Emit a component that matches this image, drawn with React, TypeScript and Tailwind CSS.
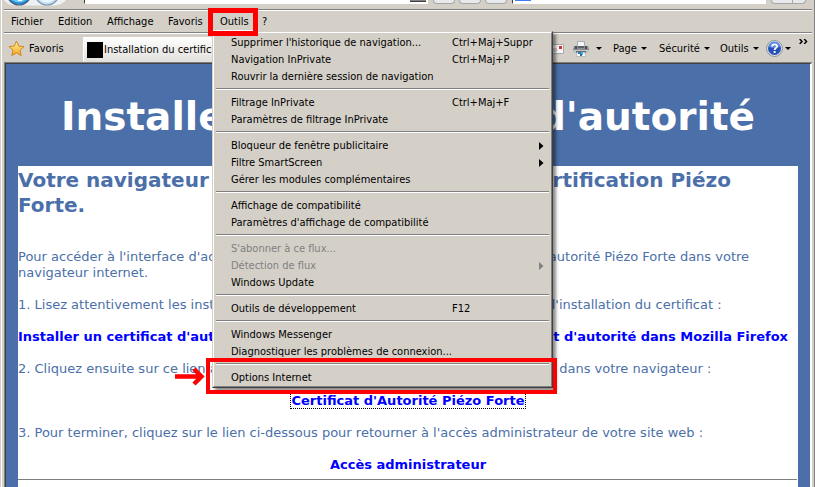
import React from "react";

type Entry = {
  label: string;
  shortcut?: string;
  submenu?: boolean;
  disabled?: boolean;
};

const groups: Entry[][] = [
  [
    { label: "Supprimer l'historique de navigation...", shortcut: "Ctrl+Maj+Suppr" },
    { label: "Navigation InPrivate", shortcut: "Ctrl+Maj+P" },
    { label: "Rouvrir la dernière session de navigation" },
  ],
  [
    { label: "Filtrage InPrivate", shortcut: "Ctrl+Maj+F" },
    { label: "Paramètres de filtrage InPrivate" },
  ],
  [
    { label: "Bloqueur de fenêtre publicitaire", submenu: true },
    { label: "Filtre SmartScreen", submenu: true },
    { label: "Gérer les modules complémentaires" },
  ],
  [{ label: "Affichage de compatibilité" }, { label: "Paramètres d'affichage de compatibilité" }],
  [
    { label: "S'abonner à ce flux...", disabled: true },
    { label: "Détection de flux", submenu: true, disabled: true },
    { label: "Windows Update" },
  ],
  [{ label: "Outils de développement", shortcut: "F12" }],
  [{ label: "Windows Messenger" }, { label: "Diagnostiquer les problèmes de connexion..." }],
];

function MenuItem({ label, shortcut, submenu, disabled }: Entry) {
  return (
    <button
      type="button"
      role="menuitem"
      disabled={disabled}
      className={
        "flex h-[17px] w-full items-center pr-[5px] pl-[15px] text-left whitespace-nowrap " +
        (disabled ? "text-[#808080]" : "text-black")
      }
    >
      <span className="w-[221px] shrink-0">{label}</span>
      <span className="flex-1">{shortcut}</span>
      {submenu && (
        <svg width="5" height="8" viewBox="0 0 5 8" aria-hidden="true">
          <path d="M0 0L4.5 4L0 8Z" fill="currentColor" />
        </svg>
      )}
    </button>
  );
}

function Separator() {
  return (
    <div role="separator" className="pt-[3px] pb-1">
      <div className="h-[2px] border-t border-b border-t-[#808080] border-b-white" />
    </div>
  );
}

function ToolsMenu() {
  return (
    <div
      role="menu"
      aria-label="Outils"
      className="absolute top-[20px] left-0 z-20 w-[341px] border border-t-[#d4d0c8] border-r-[#404040] border-b-[#404040] border-l-[#d4d0c8] shadow-[3px_3px_3px_rgba(0,0,0,0.45)]"
    >
      <div className="border border-t-white border-r-[#808080] border-b-[#808080] border-l-white bg-[#d4d0c8] px-[2px] pt-px">
        {groups.map((group, index) => (
          <div key={index}>
            {group.map((entry) => (
              <MenuItem key={entry.label} {...entry} />
            ))}
            <Separator />
          </div>
        ))}
        <div className="relative">
          <MenuItem label="Options Internet" />
          <div className="pointer-events-none absolute -top-[11px] -right-[8px] -bottom-[8px] -left-[10px] border-4 border-[#ff0000]" />
          <svg
            className="absolute -left-[41px] -top-[3px]"
            width="30"
            height="20"
            viewBox="0 0 30 20"
            aria-hidden="true"
          >
            <path d="M0 10.5H26M19 3L26.500 10.5L19 18" fill="none" stroke="#ff0000" strokeWidth="4.500" />
          </svg>
        </div>
      </div>
    </div>
  );
}

function Caret() {
  return (
    <svg width="6" height="3" viewBox="0 0 6 3" aria-hidden="true">
      <path d="M0 0H6L3 3Z" fill="#000" />
    </svg>
  );
}

function NavigationBar() {
  return (
    <div className="flex h-[10px] items-start overflow-hidden">
      <svg width="80" height="9" viewBox="4 0 80 9" className="shrink-0" aria-hidden="true">
        <path d="M4 0H66Q62 5 54 5.500H14Q8 5 4 0Z" fill="#eef1f4" />
        <circle cx="19" cy="-7" r="12" fill="#2c86d0" stroke="#47617e" strokeWidth="1.200" />
        <path d="M12 0Q19 5 26 0Z" fill="#5fd0f7" />
        <path d="M18 0H22V1H18Z" fill="#fff" />
        <circle cx="47" cy="-7" r="12" fill="#c7dff0" stroke="#7d93aa" strokeWidth="1.200" />
        <path d="M40 0Q47 5 54 0Z" fill="#e6f6fd" />
      </svg>
      <div className="flex h-[4px] w-[344px] shrink-0 justify-end border-r border-b border-l border-r-white border-b-white border-l-[#404040] bg-white">
        <span className="mr-px h-[2px] w-4 border-b border-[#404040] bg-[#808080]" />
      </div>
      <div className="ml-[5px] flex shrink-0 gap-[4px]">
        <span className="h-[4px] w-[22px] rounded-b border-x border-b border-[#a5a7ab] bg-[#e8e9eb]" />
        <span className="h-[4px] w-[22px] rounded-b border-x border-b border-[#a5a7ab] bg-[#e8e9eb]" />
        <span className="h-[4px] w-[22px] rounded-b border-x border-b border-[#a5a7ab] bg-[#e8e9eb]" />
      </div>
      <div className="ml-[5px] h-[4px] flex-1 border-b border-l border-b-white border-l-[#404040] bg-white pl-[2px]">
        <span className="block h-px w-4 bg-[#3b7cf0]" />
      </div>
      <div className="mr-[6px] ml-[5px] flex h-[4px] w-[35px] shrink-0 rounded-b border-x border-b border-[#a5a7ab] bg-[#e8e9eb]">
        <span className="w-[21px] border-r border-[#a5a7ab]" />
      </div>
    </div>
  );
}

function MenuBar() {
  return (
    <nav
      aria-label="Menus"
      className="flex h-[24px] items-center border-y border-t-white border-b-white shadow-[0_-1px_0_#808080,inset_0_-1px_0_#808080]"
    >
      <button type="button" className="w-[47px] pl-[7px] text-left">Fichier</button>
      <button type="button" className="w-[49px] pl-[7px] text-left">Edition</button>
      <button type="button" className="w-[61px] pl-[7px] text-left">Affichage</button>
      <button type="button" className="w-[51px] pl-[7px] text-left">Favoris</button>
      <div className="relative w-[46px] self-start">
        <button type="button" aria-haspopup="menu" aria-expanded="true" className="h-[20px] w-[42px] border-r border-b border-white pt-[3px] pl-2 text-left">
          Outils
        </button>
        <ToolsMenu />
        <div className="pointer-events-none absolute -top-[3px] -left-1 z-30 h-[28px] w-[50px] border-[5px] border-[#ff0000]" />
      </div>
      <button type="button" className="pl-[4px]">?</button>
    </nav>
  );
}

function Printer() {
  return (
    <svg width="16" height="16" viewBox="0 0 16 16" aria-hidden="true">
      <path d="M4.500 .5H11.500V6H4.500Z" fill="#f4f7fa" stroke="#a8acb0" />
      <path d="M1 5H15L16 8V12H0V8Z" fill="#8b8f93" />
      <path d="M2 5H4V8H2ZM12 5H14V8H12Z" fill="#4c4f52" />
      <path d="M5 5H11V7H5Z" fill="#5d6166" />
      <path d="M0 9H16V12H0Z" fill="#c3c6c9" />
      <path d="M3 10H13V12H3Z" fill="#6a6e72" />
      <path d="M4 11.500H12L12.500 15.500H3.500Z" fill="#fff" stroke="#b8bcc0" />
      <path d="M5 11H8V13H5Z" fill="#2b7fc0" />
      <path d="M8 11H10V14H8Z" fill="#36b8c9" />
      <path d="M7 13H9V15H7Z" fill="#3c66b2" />
    </svg>
  );
}

function CommandBar() {
  return (
    <div className="flex h-[28px] items-start">
      <button type="button" className="flex w-[79px] items-center gap-1 pt-[6px] pl-1">
        <svg width="17" height="17" viewBox="0 0 17 17" aria-hidden="true">
          <defs>
            <linearGradient id="gold" x1="0" y1="0" x2="0" y2="1">
              <stop offset="0" stopColor="#fff3a0" />
              <stop offset="1" stopColor="#f3a51c" />
            </linearGradient>
          </defs>
          <path
            d="M8.500 1L10.700 6L16 6.600L12 10.200L13.200 15.600L8.500 12.800L3.800 15.600L5 10.200L1 6.600L6.300 6Z"
            fill="url(#gold)"
            stroke="#d4851c"
            strokeLinejoin="round"
          />
        </svg>
        <span>Favoris</span>
      </button>
      <div className="mt-[3px] flex h-[25px] w-[130px] items-center gap-px overflow-hidden border-l border-white bg-linear-to-b from-white to-[#e2e0dc] pl-[3px] whitespace-nowrap">
        <span className="size-4 shrink-0 bg-black" />
        <span>Installation du certificat</span>
      </div>
      <div className="flex flex-1 items-center justify-end pt-[6px]">
        <svg width="18" height="12" viewBox="0 0 18 12" className="shrink-0" aria-hidden="true">
          <path d="M.5 1.500H17.500V10.500H.5Z" fill="#f7f7f7" stroke="#a9a9b0" />
          <path d="M13 3H16V6H13Z" fill="#d8322c" />
          <path d="M7 6H11M7 8H11" stroke="#a9a9b0" />
        </svg>
        <button type="button" aria-label="Imprimer" className="ml-[9px] flex w-[40px] items-center gap-[7px]">
          <Printer />
          <Caret />
        </button>
        <button type="button" className="flex w-[46px] items-center gap-1">
          Page <Caret />
        </button>
        <button type="button" className="flex w-[61px] items-center gap-1">
          Sécurité <Caret />
        </button>
        <button type="button" className="flex w-[46px] items-center gap-1">
          Outils <Caret />
        </button>
        <button type="button" aria-label="Aide" className="flex w-[33px] items-center gap-[2px]">
          <svg width="17" height="17" viewBox="0 0 17 17" aria-hidden="true">
            <circle cx="8.500" cy="8.500" r="8" fill="#d7dbe2" stroke="#8d949e" />
            <circle cx="8.500" cy="8.500" r="6.500" fill="#2450b8" />
            <path d="M3 7A5.500 5.500 0 0 1 14 7Q8.500 9 3 7Z" fill="#5c88e0" />
            <path
              d="M6 6.500Q6.200 4.300 8.600 4.300Q11 4.300 11 6.300Q11 7.500 9.600 8.200Q8.600 8.800 8.600 10"
              fill="none"
              stroke="#fff"
              strokeWidth="1.800"
            />
            <path d="M7.600 11H9.600V13H7.600Z" fill="#fff" />
          </svg>
          <Caret />
        </button>
      </div>
      <button type="button" aria-label="Plus d'outils" className="mr-[4px] pt-[5px]">
        <svg width="9" height="5" viewBox="0 0 9 5" aria-hidden="true">
          <path d="M.7 0L3 2.500L.7 5M5.200 0L7.500 2.500L5.200 5" fill="none" stroke="#000" strokeWidth="1.500" />
        </svg>
      </button>
    </div>
  );
}

function WebPage() {
  return (
    <main className="flex flex-1 flex-col border-t border-r-2 border-l border-t-[#404040] border-r-white border-l-[#404040] bg-[#4b6fa8] px-3 font-['Verdana','DejaVu_Sans',sans-serif] text-[13px] leading-4 text-[#4b6fa8]">
      <h1 className="pt-[28px] pb-[24px] text-center text-[39px] leading-[50px] font-bold whitespace-nowrap text-white">
        Installer un certificat d'autorité
      </h1>
      <div className="flex-1 bg-white">
        <h2 className="pt-[2px] text-[20px] leading-[25px] font-bold">
          Votre navigateur doit connaître l'autorité de certification Piézo
          <br />
          Forte.
        </h2>
        <p className="mt-[31px] whitespace-nowrap">
          Pour accéder à l'interface d'administration, vous devez télécharger le certificat d'autorité Piézo Forte dans votre
          <br />
          navigateur internet.
        </p>
        <p className="mt-4 whitespace-nowrap">
          1. Lisez attentivement les instructions qui correspondent à votre navigateur pour l'installation du certificat :
        </p>
        <p className="mt-4 flex justify-between pr-[10px] font-bold whitespace-nowrap text-[#0000ff]">
          <a href="#ie">Installer un certificat d'autorité</a>
          <a href="#firefox">certificat d'autorité dans Mozilla Firefox</a>
        </p>
        <p className="mt-4 whitespace-nowrap">
          2. Cliquez ensuite sur ce lien afin d'installer immédiatement le certificat d'autorité dans votre navigateur :
        </p>
        <p className="mt-4 text-center font-bold text-[#0000ff]">
          <a href="#certificat" className="outline-1 outline-black outline-dotted">
            Certificat d'Autorité Piézo Forte
          </a>
        </p>
        <p className="mt-4">
          3. Pour terminer, cliquez sur le lien ci-dessous pour retourner à l'accès administrateur de votre site web :
        </p>
        <p className="mt-4 text-center font-bold text-[#0000ff]">
          <a href="#admin">Accès administrateur</a>
        </p>
        <hr className="mt-[6px] mr-px border-[#808080]" />
      </div>
    </main>
  );
}

export default function App() {
  return (
    <div className="flex min-h-screen flex-col overflow-hidden border-r border-[#808080] bg-[#d4d0c8] pr-[2px] pl-px font-['Tahoma','DejaVu_Sans_Condensed',sans-serif] text-[11px] leading-[14px] text-black">
      <div className="flex flex-1 flex-col border-l border-white pl-[2px]">
        <NavigationBar />
        <MenuBar />
        <CommandBar />
        <div className="flex flex-1 flex-col border-t border-l border-[#808080]">
          <WebPage />
        </div>
      </div>
    </div>
  );
}
